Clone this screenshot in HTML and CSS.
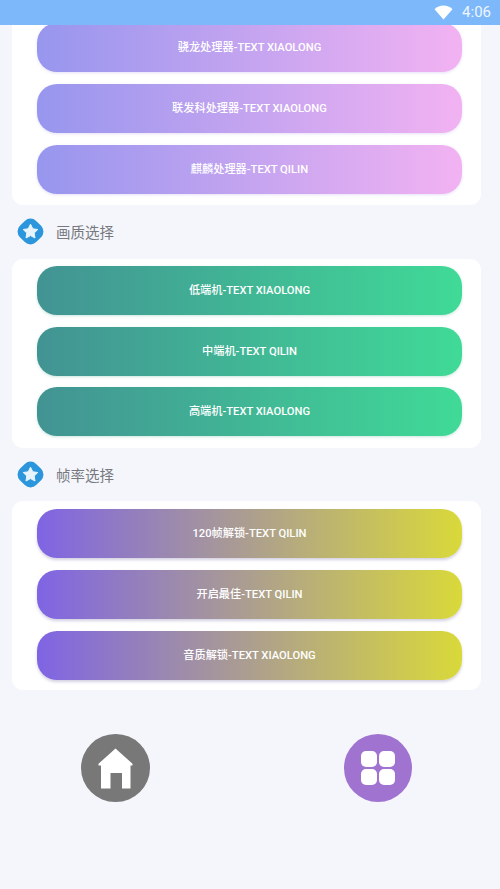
FILE: index.html
```html
<!DOCTYPE html>
<html lang="zh">
<head>
<meta charset="utf-8">
<title>画质选择</title>
<link rel="stylesheet" href="styles.css">
</head>
<body>
<div class="app">
  <header class="status">
    <svg class="wifi" width="19" height="15" viewBox="0 0 19 15"><path d="M0.5 4.2C3 1.8 6 0.6 9.5 0.6S16 1.8 18.5 4.2L9.5 14.4Z" fill="#fff"/></svg>
    <span class="time">4:06</span>
  </header>
  <main class="content">
    <section class="card card-first">
      <button class="btn purple">骁龙处理器-TEXT XIAOLONG</button>
      <button class="btn purple">联发科处理器-TEXT XIAOLONG</button>
      <button class="btn purple">麒麟处理器-TEXT QILIN</button>
    </section>
    <h2 class="title">
      <svg class="star" width="27" height="27" viewBox="0 0 27 27"><rect x="2" y="2" width="23" height="23" rx="8" transform="rotate(45 13.5 13.5)" fill="#2b96dc"/><path d="M13.5 6.2l2.3 4.6 5 .7-3.6 3.5.8 5-4.5-2.4-4.5 2.4.8-5-3.6-3.5 5-.7z" fill="#e8f4fc" stroke="#e8f4fc" stroke-width="1" stroke-linejoin="round"/></svg>
      <span class="title-text">画质选择</span>
    </h2>
    <section class="card">
      <button class="btn green">低端机-TEXT XIAOLONG</button>
      <button class="btn green">中端机-TEXT QILIN</button>
      <button class="btn green">高端机-TEXT XIAOLONG</button>
    </section>
    <h2 class="title">
      <svg class="star" width="27" height="27" viewBox="0 0 27 27"><rect x="2" y="2" width="23" height="23" rx="8" transform="rotate(45 13.5 13.5)" fill="#2b96dc"/><path d="M13.5 6.2l2.3 4.6 5 .7-3.6 3.5.8 5-4.5-2.4-4.5 2.4.8-5-3.6-3.5 5-.7z" fill="#e8f4fc" stroke="#e8f4fc" stroke-width="1" stroke-linejoin="round"/></svg>
      <span class="title-text">帧率选择</span>
    </h2>
    <section class="card card-last">
      <button class="btn yellow">120帧解锁-TEXT QILIN</button>
      <button class="btn yellow">开启最佳-TEXT QILIN</button>
      <button class="btn yellow">音质解锁-TEXT XIAOLONG</button>
    </section>
    <nav class="dock">
      <a class="round grey" aria-label="首页">
        <svg width="35" height="41" viewBox="0 0 35 41"><path d="M17.5 0.5L34.5 15.8V17.5H32.5V40.5H24V25H12.5V40.5H3V17.5H0.5V15.8Z" fill="#fff"/></svg>
      </a>
      <a class="round violet" aria-label="应用">
        <svg width="34" height="34" viewBox="0 0 34 34" fill="#fff"><rect width="16" height="16" rx="5"/><rect x="18" width="16" height="16" rx="5"/><rect y="18" width="16" height="16" rx="5"/><rect x="18" y="18" width="16" height="16" rx="5"/></svg>
      </a>
    </nav>
  </main>
</div>
</body>
</html>
```

FILE: styles.css
```css
* { box-sizing: border-box; }
html, body { margin: 0; padding: 0; }
body { background: #f4f6fb; font-family: Roboto, "Noto Sans CJK SC", sans-serif; }
.app { width: 500px; height: 889px; overflow: hidden; display: flex; flex-direction: column; }
.status { position: relative; z-index: 2; flex: none; height: 25px; background: #7db8fa; display: flex; align-items: center; justify-content: flex-end; gap: 9px; padding: 0 9px 0 0; color: #eef6ff; }
.wifi { display: block; margin-top: -1px; }
.time { font-size: 15px; line-height: 25px; }
.content { flex: 1; display: flex; flex-direction: column; }
.card { margin: 0 19px 0 12px; padding: 7.2px 19px 11.6px 25px; background: #fff; border-radius: 11px; display: flex; flex-direction: column; gap: 11.6px; }
.card-first { margin-top: -8.8px; border-radius: 0 0 11px 11px; }
.card-last { padding-top: 8px; padding-bottom: 10px; gap: 12px; }
.btn { display: block; width: 100%; height: 49px; padding: 0; border: 0; border-radius: 20px; color: #fff; font: 500 11.2px/49px Roboto, "Noto Sans CJK SC", sans-serif; text-align: center; }
.purple { background: linear-gradient(90deg, #9796ee, #f2b2f2); box-shadow: 0 1px 3px rgba(170, 150, 230, .3); }
.green { background: linear-gradient(90deg, #429393, #40da97); box-shadow: 0 1px 3px rgba(80, 170, 150, .3); }
.yellow { background: linear-gradient(90deg, #7f64e4, #d9d93a); box-shadow: 0 2px 3px rgba(130, 120, 170, .35); }
.title { margin: 0; height: 53.6px; padding-left: 18px; display: flex; align-items: center; gap: 12px; font-size: 14.5px; font-weight: 400; color: #77797f; }
.title-text { padding-bottom: 1px; }
.star { display: block; flex: none; margin-left: -1px; }
.dock { margin-top: 44px; padding: 0 88px 0 81px; display: flex; justify-content: space-between; }
.round { width: 68.5px; height: 68px; border-radius: 50%; display: flex; align-items: center; justify-content: center; }
.grey { background: #787878; }
.violet { background: #a173d1; }
```
